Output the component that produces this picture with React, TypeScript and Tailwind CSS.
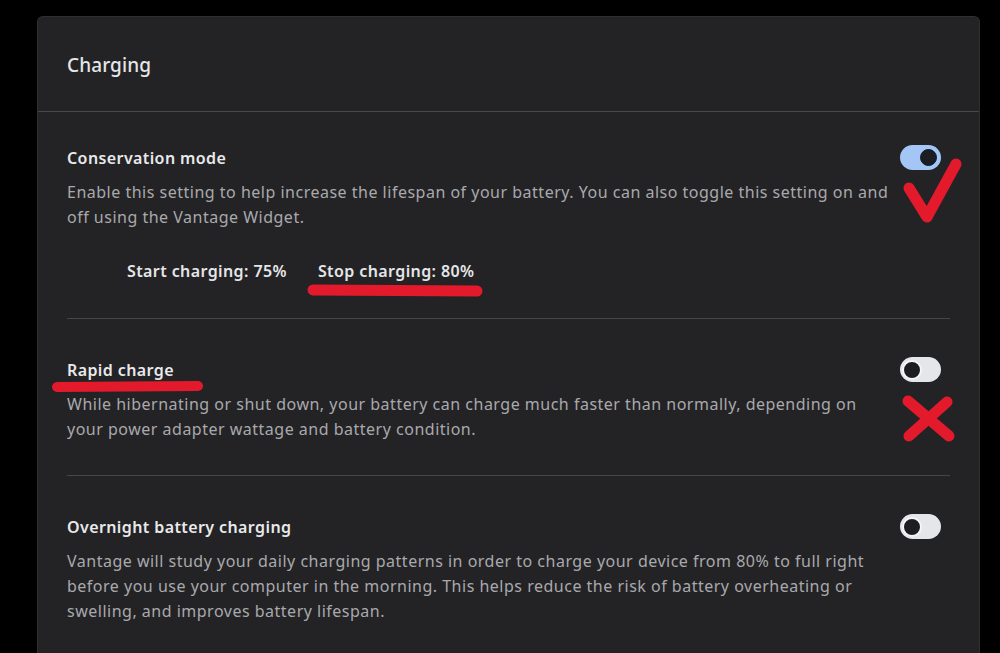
import React from "react"

const font = { fontFamily: '"Noto Sans", "Open Sans", Arial, sans-serif' }

function Toggle({ on }: { on: boolean }) {
  if (on) {
    return (
      <div className="w-[41px] h-[25px] rounded-full bg-[#a3c6f7] flex items-center justify-end pr-[4px] shrink-0">
        <div className="w-[17px] h-[17px] rounded-full bg-[#1c1d22] border border-[#0f1a2a]" />
      </div>
    )
  }
  return (
    <div className="w-[41px] h-[25px] rounded-full bg-[#e4e6ea] flex items-center pl-[2px] shrink-0">
      <div className="w-[20px] h-[20px] rounded-full bg-[#1e1e21] border-2 border-[#f4f5f7]" />
    </div>
  )
}

function Setting({
  title,
  on,
  children,
  extra,
}: {
  title: string
  on: boolean
  children: React.ReactNode
  extra?: React.ReactNode
}) {
  return (
    <div className="flex items-start justify-between">
      <div className="w-[828px]">
        <div className="text-[16px] leading-[24px] font-semibold tracking-[0.4px] text-[#e9e9eb]">{title}</div>
        <p className="mt-[10px] text-[16px] leading-[25px] tracking-[0.5px] text-[#a9a9ad]">{children}</p>
        {extra}
      </div>
      <div className="mr-[9px] -mt-[1px]">
        <Toggle on={on} />
      </div>
    </div>
  )
}

export default function App() {
  return (
    <div className="relative w-[1000px] h-[653px] bg-black overflow-hidden pt-[16px] pl-[37px]" style={font}>
      <div className="w-[943px] h-[700px] bg-[#232325] rounded-t-[6px] border-t border-x border-[#2f2f32]">
        <div className="h-[95px] flex items-center pt-[2px] px-[29px] border-b border-[#47474c]">
          <h1 className="text-[19px] font-medium tracking-[0.1px] text-[#e6e6e8]">Charging</h1>
        </div>

        <div className="px-[29px]">
          <div className="pt-[34px] pb-[35px] border-b border-[#45454a]">
            <Setting
              title="Conservation mode"
              on={true}
              extra={
                <div className="mt-[29px] ml-[60px] flex gap-[31px] text-[16px] leading-[24px] font-semibold tracking-[0.4px] text-[#e6e6e8]">
                  <span>Start charging: 75%</span>
                  <span>Stop charging: 80%</span>
                </div>
              }
            >
              Enable this setting to help increase the lifespan of your battery. You can also toggle this setting on and off using the Vantage Widget.
            </Setting>
          </div>

          <div className="pt-[39px] pb-[33px] border-b border-[#45454a]">
            <Setting title="Rapid charge" on={false}>
              While hibernating or shut down, your battery can charge much faster than normally, depending on your power adapter wattage and battery condition.
            </Setting>
          </div>

          <div className="pt-[39px] pb-[33px]">
            <Setting title="Overnight battery charging" on={false}>
              Vantage will study your daily charging patterns in order to charge your device from 80% to full right before you use your computer in the morning. This helps reduce the risk of battery overheating or swelling, and improves battery lifespan.
            </Setting>
          </div>
        </div>
      </div>

      {/* red pen marks drawn over the screenshot */}
      <svg className="absolute left-0 top-0 pointer-events-none" width="1000" height="653" viewBox="0 0 1000 653">
        <g stroke="#e21a2c" strokeLinecap="round" strokeLinejoin="round" fill="none">
          <path d="M909 188 L927 217 L956 164" strokeWidth="11" />
          <path d="M908 401 L949 436" strokeWidth="11" />
          <path d="M947 402 L909 436" strokeWidth="11" />
          <path d="M313 290 L477 291" strokeWidth="11" />
          <path d="M57 387 L198 386" strokeWidth="10" />
        </g>
      </svg>
    </div>
  )
}
